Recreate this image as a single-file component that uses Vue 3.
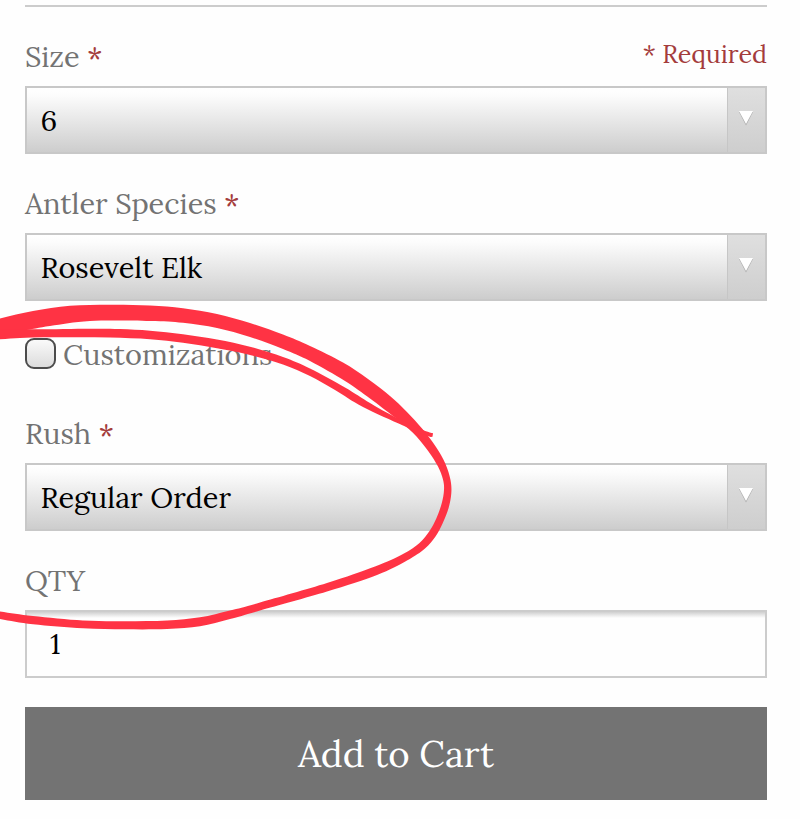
<template>
  <div class="page">
    <form class="product-form" @submit.prevent>
      <div class="form-group">
        <div class="label-row">
          <label class="label" for="size">Size <span class="star">*</span></label>
          <span class="required">* Required</span>
        </div>
        <div class="select-box">
          <select id="size" v-model="form.size">
            <option>6</option>
          </select>
          <span class="arrow"><svg width="16" height="15" viewBox="0 0 16 15"><path class="arrow-shadow" d="M1 1H15L8 14.5Z" /><path d="M1 0H15L8 13Z" /></svg></span>
        </div>
      </div>

      <div class="form-group">
        <label class="label" for="species">Antler Species <span class="star">*</span></label>
        <div class="select-box">
          <select id="species" v-model="form.species">
            <option>Rosevelt Elk</option>
          </select>
          <span class="arrow"><svg width="16" height="15" viewBox="0 0 16 15"><path class="arrow-shadow" d="M1 1H15L8 14.5Z" /><path d="M1 0H15L8 13Z" /></svg></span>
        </div>
      </div>

      <label class="check-row">
        <input v-model="form.custom" type="checkbox" />
        <span>Customizations</span>
      </label>

      <div class="form-group">
        <label class="label" for="rush">Rush <span class="star">*</span></label>
        <div class="select-box">
          <select id="rush" v-model="form.rush">
            <option>Regular Order</option>
          </select>
          <span class="arrow"><svg width="16" height="15" viewBox="0 0 16 15"><path class="arrow-shadow" d="M1 1H15L8 14.5Z" /><path d="M1 0H15L8 13Z" /></svg></span>
        </div>
      </div>

      <div class="form-group">
        <label class="label" for="qty">QTY</label>
        <input id="qty" v-model="form.qty" class="qty-input" type="text" />
      </div>

      <button class="btn-cart" type="submit">Add to Cart</button>
    </form>

    <svg class="marker" width="800" height="819" viewBox="0 0 800 819">
      <path :d="loopPath" />
      <path :d="tailPath" />
    </svg>
  </div>
</template>

<script setup>
import { reactive } from 'vue'

const form = reactive({
  size: '6',
  species: 'Rosevelt Elk',
  custom: false,
  rush: 'Regular Order',
  qty: '1'
})

// Both edges of the marker loop, clockwise from the left
const loopOuter = [
  [-30, 326], [0, 318.5], [33, 311], [70, 305.8], [110, 304.8], [150, 305.5], [183, 308.3],
  [217, 314], [250, 323], [283, 334.5], [310, 346], [343, 362.5], [368, 379],
  [390, 396], [406.7, 411.7], [422.5, 429], [436, 447], [445.5, 464], [450.5, 480],
  [451.3, 493.3], [448.6, 508], [442.8, 523], [435.5, 536.5], [425, 548.5], [407, 560.5],
  [377, 575], [327, 591.5], [260, 610.5], [230, 619], [200, 626.3], [167, 629],
  [125, 629.3], [83, 628.3], [33, 624.3], [0, 619], [-30, 613]
]
const loopInner = [
  [-30, 606], [0, 611.5], [33, 616], [83, 620.5], [125, 621.2], [167, 620.5], [200, 617.3],
  [230, 610.5], [260, 602.5], [327, 583], [375, 566.5], [403, 554], [419.5, 543], [429.5, 531],
  [436.3, 518.5], [441.8, 503], [444, 490], [443, 479.5], [438, 466.5], [428.5, 451.5],
  [416.5, 436.5], [402, 423], [393, 416], [370, 398.5], [345, 381], [310, 361],
  [283, 349], [250, 337], [217, 328], [183, 322.8], [150, 321], [90, 321], [50, 326],
  [20, 331], [-30, 336]
]

// Thin second pass that ends past the loop
const tailUpper = [
  [-30, 329], [33, 329.3], [90, 328.7], [120, 329], [150, 330.7], [183, 334.2], [217, 339.5],
  [250, 346.7], [283, 357], [310, 368.5], [345, 387.5], [370, 403], [395, 417], [423, 430], [433, 433.3]
]
const tailLower = [
  [432.5, 436.8], [427, 435.7], [403, 425.5], [363, 407], [335, 390], [310, 376],
  [283, 364.5], [250, 355], [217, 348.3], [183, 342.8], [150, 339.3], [110, 337.6],
  [67, 337.3], [20, 338], [-30, 342]
]

function curve(points) {
  let d = ''
  for (let i = 0; i < points.length - 1; i++) {
    const a = points[i - 1] || points[i]
    const b = points[i]
    const c = points[i + 1]
    const e = points[i + 2] || c
    d += `C${b[0] + (c[0] - a[0]) / 6} ${b[1] + (c[1] - a[1]) / 6} ${c[0] - (e[0] - b[0]) / 6} ${c[1] - (e[1] - b[1]) / 6} ${c[0]} ${c[1]}`
  }
  return d
}

function outline(one, two) {
  return `M${one[0]}${curve(one)}L${two[0]}${curve(two)}Z`
}

const loopPath = outline(loopOuter, loopInner)
const tailPath = outline(tailUpper, tailLower)
</script>

<style>
body {
  margin: 0;
  background: #fefefe;
}
</style>

<style scoped>
.page {
  position: relative;
  box-sizing: border-box;
  width: 800px;
  height: 819px;
  padding: 5px 33px 0 25px;
  overflow: hidden;
  font-family: Lora, "Liberation Serif", serif;
  font-size: 28.9px;
  color: #737373;
}

.product-form {
  border-top: 2px solid #ccc;
}

.label-row {
  display: flex;
  justify-content: space-between;
}

.label {
  display: block;
  height: 40px;
  padding: 30px 0 9px;
  line-height: 40px;
  white-space: nowrap;
}

.star,
.required {
  color: #a43c3c;
}

.required {
  padding-top: 30px;
  font-size: 25.1px;
  line-height: 35px;
}

.select-box {
  display: flex;
  box-sizing: border-box;
  height: 68px;
  border: 2px solid #c8c8c8;
  background: linear-gradient(#fff 0%, #fcfcfc 12%, #cdcdcd 100%);
}

select {
  flex: 1;
  appearance: none;
  margin: 0;
  padding: 0 13.5px;
  border: none;
  border-radius: 0;
  background: transparent;
  font: inherit;
  color: #000;
}

.arrow {
  display: flex;
  justify-content: center;
  box-sizing: border-box;
  width: 38px;
  padding: 23px 2px 0 0;
  border-left: 1px solid #c6c6c6;
  background: linear-gradient(#dfdfdf, #cecece);
}

.arrow svg {
  fill: #fff;
}

.arrow-shadow {
  fill: #aaa;
}

.check-row {
  display: flex;
  gap: 7px;
  box-sizing: border-box;
  height: 83px;
  padding-top: 34px;
  line-height: 40px;
}

.check-row input {
  appearance: none;
  box-sizing: border-box;
  width: 31px;
  height: 31px;
  margin: 3px 0 0;
  border: 2px solid #4c4c4c;
  border-radius: 9px;
  background: linear-gradient(#fafafa, #dcdcdc);
}

.qty-input {
  display: block;
  box-sizing: border-box;
  width: 100%;
  height: 68px;
  padding: 0 23px 1px;
  border: 2px solid #ccc;
  border-radius: 0;
  background: linear-gradient(#d0d0d0, #fefefe 6px);
  font: inherit;
  color: #000;
}

.btn-cart {
  display: block;
  width: 100%;
  height: 93px;
  margin-top: 29px;
  padding: 0 0 1px;
  border: none;
  background: #737373;
  font-family: inherit;
  font-size: 36.6px;
  color: #fff;
}

.marker {
  position: absolute;
  top: 0;
  left: 0;
  fill: #ff3344;
  pointer-events: none;
}
</style>
